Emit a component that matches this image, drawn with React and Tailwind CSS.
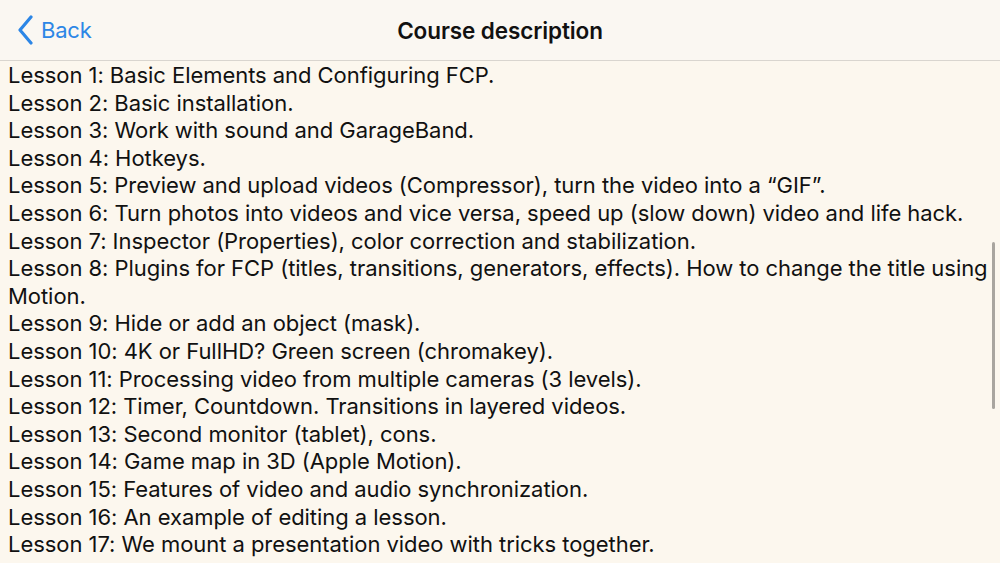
import React from "react";

const lines = [
  "Lesson 1: Basic Elements and Configuring FCP.",
  "Lesson 2: Basic installation.",
  "Lesson 3: Work with sound and GarageBand.",
  "Lesson 4: Hotkeys.",
  "Lesson 5: Preview and upload videos (Compressor), turn the video into a \u201cGIF\u201d.",
  "Lesson 6: Turn photos into videos and vice versa, speed up (slow down) video and life hack.",
  "Lesson 7: Inspector (Properties), color correction and stabilization.",
  "Lesson 8: Plugins for FCP (titles, transitions, generators, effects). How to change the title using",
  "Motion.",
  "Lesson 9: Hide or add an object (mask).",
  "Lesson 10: 4K or FullHD? Green screen (chromakey).",
  "Lesson 11: Processing video from multiple cameras (3 levels).",
  "Lesson 12: Timer, Countdown. Transitions in layered videos.",
  "Lesson 13: Second monitor (tablet), cons.",
  "Lesson 14: Game map in 3D (Apple Motion).",
  "Lesson 15: Features of video and audio synchronization.",
  "Lesson 16: An example of editing a lesson.",
  "Lesson 17: We mount a presentation video with tricks together.",
  "Lesson 18: Work with titles and templates in Apple Motion.",
];

export default function App() {
  return (
    <div
      className="relative w-[1000px] h-[563px] overflow-hidden bg-[#fcf7ee] text-[#111111]"
      style={{ fontFamily: "Inter, 'Noto Sans', sans-serif" }}
    >
      <header className="h-[61px] bg-[#faf7f2] border-b border-[#d9d5cf] flex items-center relative">
        <div className="flex items-center pl-[17px] text-[#2c86e6]">
          <svg width="18" height="30" viewBox="0 0 18 30" fill="none">
            <path d="M14 2 L3 15 L14 28" stroke="#2c86e6" strokeWidth="3.2" strokeLinecap="round" strokeLinejoin="round" />
          </svg>
          <span className="ml-[6px] text-[22px] leading-none tracking-[-0.2px]">Back</span>
        </div>
        <div className="absolute inset-0 flex items-center justify-center pointer-events-none pt-[2px]">
          <span className="text-[22.5px] font-semibold tracking-[-0.1px]">Course description</span>
        </div>
      </header>
      <div className="pl-[8px] pt-[1px] text-[22px] leading-[27.6px] tracking-[-0.05px] whitespace-nowrap">
        {lines.map((l, i) => (
          <div key={i}>{l}</div>
        ))}
      </div>
      <div className="absolute left-[992px] top-[242px] w-[3px] h-[167px] rounded-full bg-[#a9a59f]" />
    </div>
  );
}
